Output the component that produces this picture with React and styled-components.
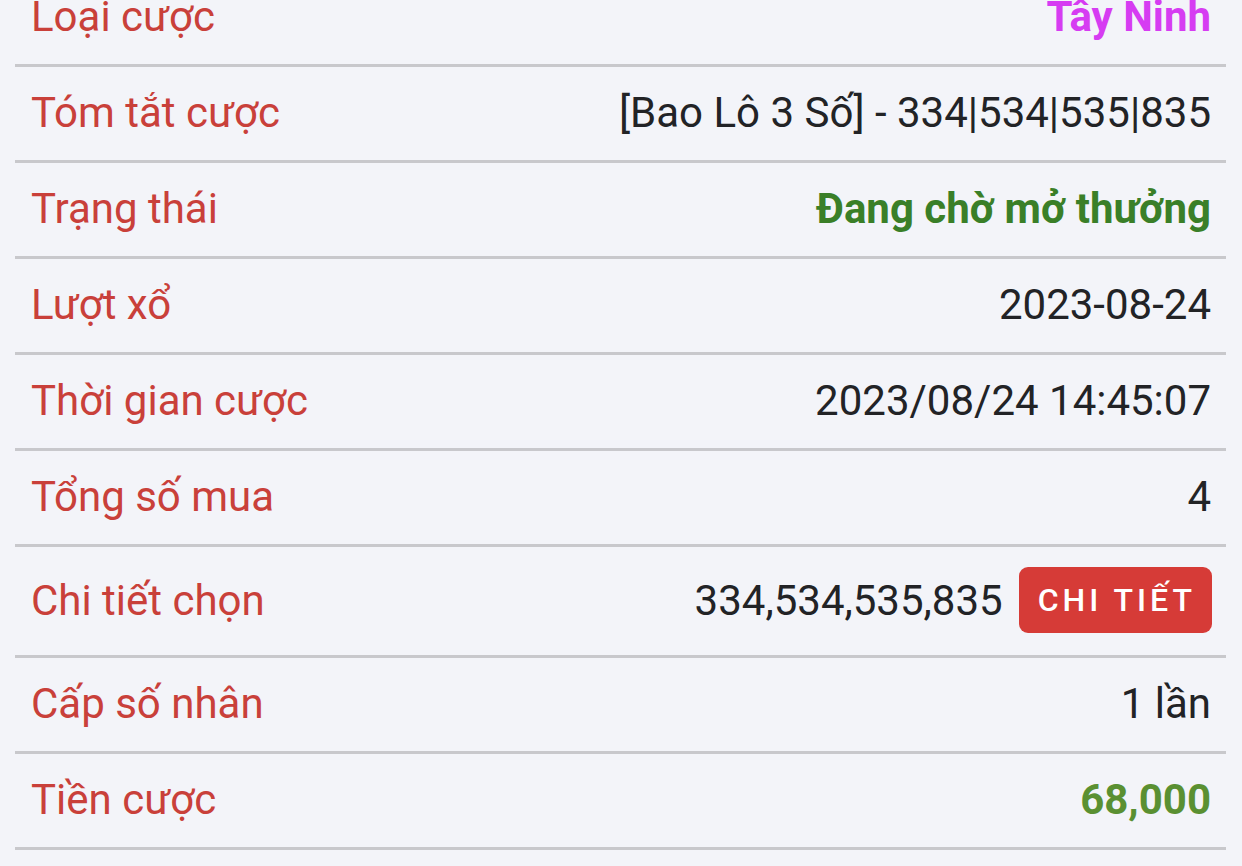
import React from 'react'
import styled, { createGlobalStyle } from 'styled-components'

const GlobalStyle = createGlobalStyle`
  html, body {
    margin: 0;
    padding: 0;
    background-color: #f3f4f9;
    overflow: hidden;
  }
  body {
    font-family: Roboto, "Noto Sans", "Liberation Sans", sans-serif;
  }
`

const Container = styled.div`
    width: 100%;
    height: 866px;
    background-color: #f3f4f9;
    overflow: hidden;
`
const List = styled.div`
    margin: -29px 16px 0 15px;
    display: flex;
    flex-direction: column;
`
const Row = styled.div`
    display: flex;
    justify-content: space-between;
    align-items: center;
    padding: 20px 15px 22px 16px;
    border-bottom: 3px solid #c8c8cc;
`
const Label = styled.span`
    font-size: 42px;
    line-height: 51px;
    color: #c9403a;
`
const Value = styled.div`
    display: flex;
    align-items: center;
    gap: 16px;
    font-size: 42px;
    line-height: 51px;
    color: ${props => props.color || '#222326'};
    font-weight: ${props => props.bold ? 700 : 400};
`
const Button = styled.button`
    border: none;
    background-color: #d63b37;
    color: #ffffff;
    font-family: Roboto, "Noto Sans", sans-serif;
    font-size: 32px;
    font-weight: 500;
    letter-spacing: 4px;
    height: 66px;
    padding: 0 16px 0 19px;
    margin-right: -1px;
    border-radius: 9px;
    cursor: pointer;
`

const rows = [
  { label: 'Loại cược', value: 'Tây Ninh', color: '#d63cf2', bold: true },
  { label: 'Tóm tắt cược', value: '[Bao Lô 3 Số] - 334|534|535|835' },
  { label: 'Trạng thái', value: 'Đang chờ mở thưởng', color: '#3a7f28', bold: true },
  { label: 'Lượt xổ', value: '2023-08-24' },
  { label: 'Thời gian cược', value: '2023/08/24 14:45:07' },
  { label: 'Tổng số mua', value: '4' },
  { label: 'Chi tiết chọn', value: '334,534,535,835', button: 'CHI TIẾT' },
  { label: 'Cấp số nhân', value: '1 lần' },
  { label: 'Tiền cược', value: '68,000', color: '#5a9032', bold: true },
]

const App = () => {
  return (
    <Container>
      <GlobalStyle />
      <List>
        {rows.map(r => (
          <Row key={r.label}>
            <Label>{r.label}</Label>
            <Value color={r.color} bold={r.bold}>
              {r.value}
              {r.button && <Button>{r.button}</Button>}
            </Value>
          </Row>
        ))}
      </List>
    </Container>
  )
}

export default App
